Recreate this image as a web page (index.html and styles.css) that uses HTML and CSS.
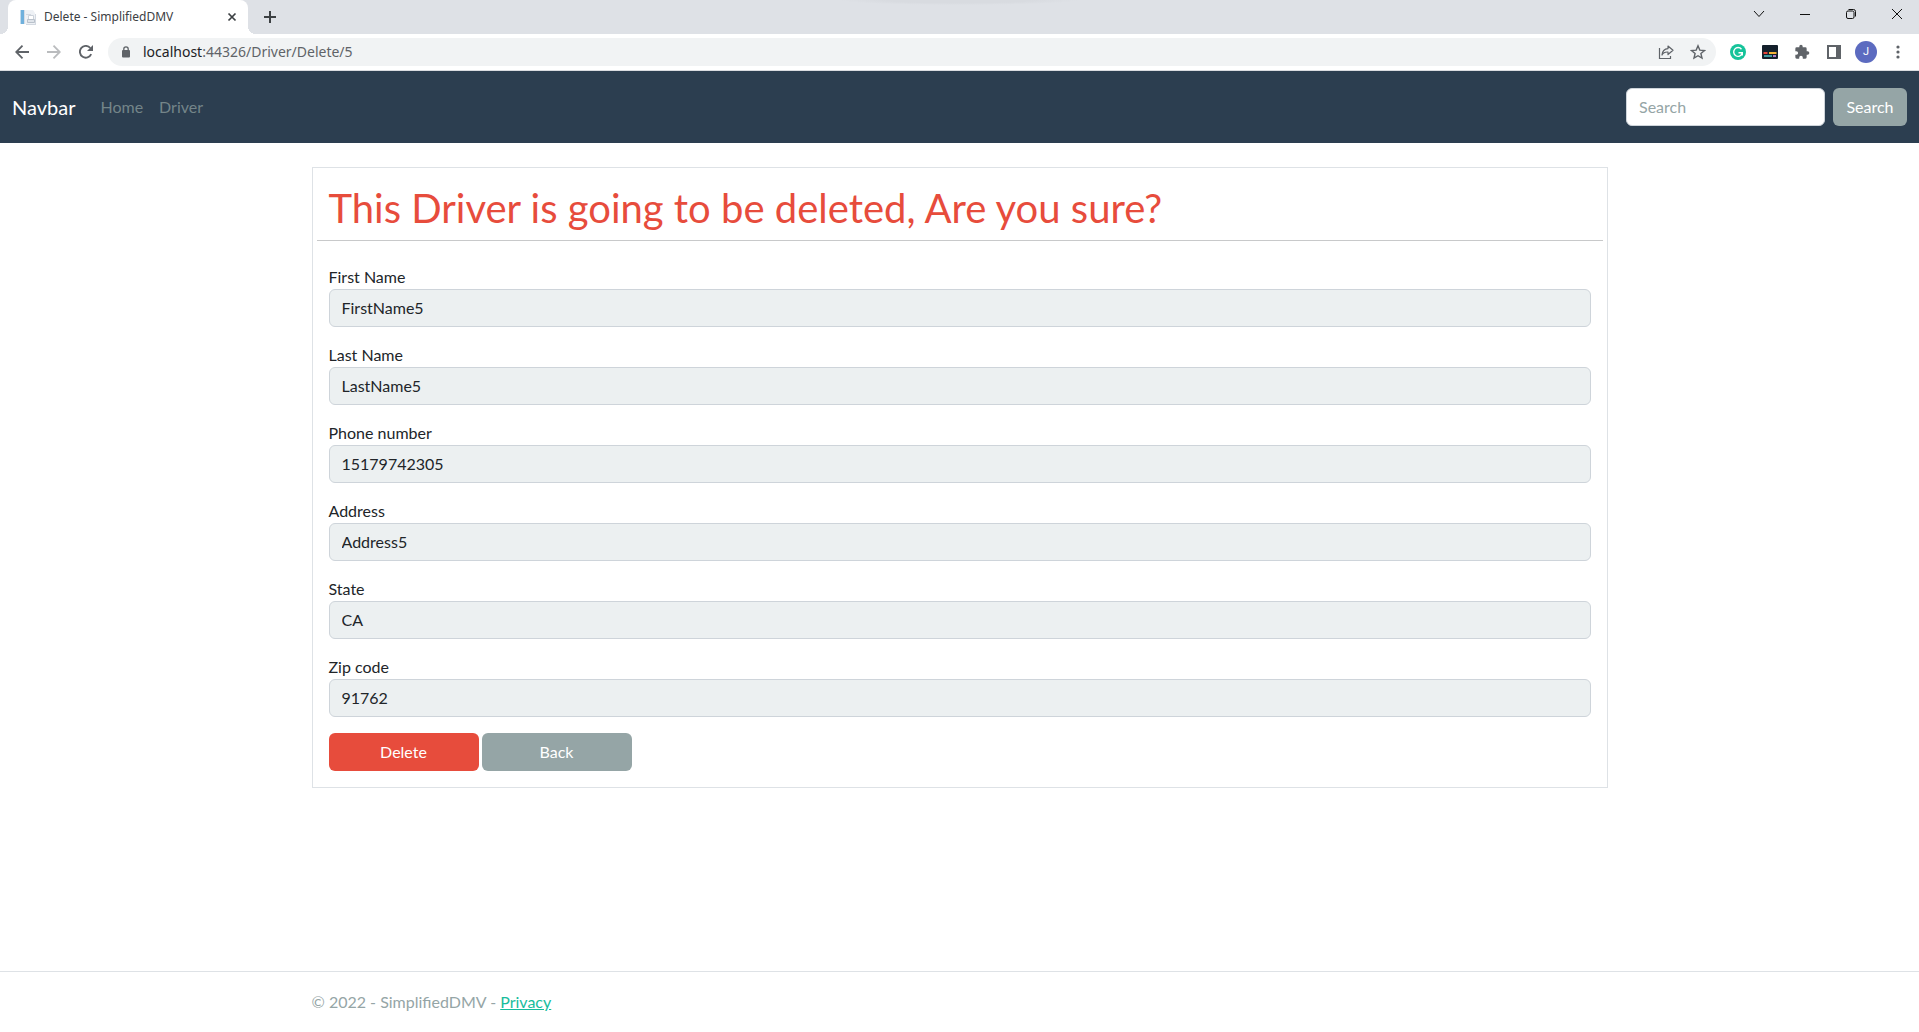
FILE: index.html
```html
<!DOCTYPE html>
<html lang="en">
<head>
<meta charset="utf-8">
<meta name="viewport" content="width=device-width, initial-scale=1">
<title>Delete - SimplifiedDMV</title>
<link rel="stylesheet" href="styles.css">
</head>
<body>
<header class="browser">
  <div class="tabstrip">
    <div class="tab">
      <svg class="favicon" width="16" height="16" viewBox="0 0 16 16"><path fill="#eef1f5" d="M5 1h8l2 3v11H5z"/><path fill="#6fb0dc" d="M1 1h3v14H1z"/><path fill="#c3dcee" d="M0 1h1v14H0z"/><path fill="#d7dde6" d="M4 1h1v14H4z"/><path stroke="#d3d9e1" d="M6 5.500h5M6 15.500h10M15.500 5v10"/><path fill="#fff" stroke="#ccd2da" d="M8.500 6.500h5v4h-5z"/><path fill="#dfe4ea" stroke="#b9c1cb" d="M7.500 10.500h7v3h-7z"/></svg>
      <span class="tab-title">Delete - SimplifiedDMV</span>
      <button class="icon-btn" type="button" aria-label="Close tab"><svg width="10" height="10" viewBox="0 0 10 10"><path d="M1.500 1.500l7 7M8.500 1.500l-7 7" stroke="#3c4043" stroke-width="1.700"/></svg></button>
    </div>
    <button class="icon-btn new-tab" type="button" aria-label="New tab"><svg width="12" height="12" viewBox="0 0 12 12"><path d="M6 0v12M0 6h12" stroke="#3c4043" stroke-width="2"/></svg></button>
    <div class="window-controls">
      <button class="icon-btn" type="button" aria-label="Search tabs"><svg width="12" height="12" viewBox="0 0 12 12"><path d="M1 3l5 5.500L11 3" fill="none" stroke="#111"/></svg></button>
      <button class="icon-btn" type="button" aria-label="Minimize"><svg width="10" height="12" viewBox="0 0 10 12"><path d="M0 6.500h10" stroke="#111"/></svg></button>
      <button class="icon-btn" type="button" aria-label="Restore"><svg width="10" height="10" viewBox="0 0 10 10"><rect x=".500" y="2" width="7.500" height="7.500" rx="1.500" fill="none" stroke="#111"/><path d="M2.500 .500H7.500a2 2 0 0 1 2 2V7.500" fill="none" stroke="#111"/></svg></button>
      <button class="icon-btn" type="button" aria-label="Close"><svg width="10" height="10" viewBox="0 0 10 10"><path d="M0 0l10 10M10 0L0 10" stroke="#111"/></svg></button>
    </div>
  </div>
  <div class="toolbar">
    <button class="icon-btn" type="button" aria-label="Back"><svg width="14" height="14" viewBox="0 0 14 14"><path d="M14 7H1.500M7.500 .700L1.200 7l6.300 6.300" fill="none" stroke="#5f6368" stroke-width="1.800"/></svg></button>
    <button class="icon-btn" type="button" aria-label="Forward"><svg width="14" height="14" viewBox="0 0 14 14"><path d="M0 7h12.500M6.500 .700L12.800 7l-6.300 6.300" fill="none" stroke="#babcbe" stroke-width="1.800"/></svg></button>
    <button class="icon-btn" type="button" aria-label="Reload"><svg width="14" height="14" viewBox="0 0 14 14"><path d="M12.200 9.200A5.900 5.900 0 1 1 11.300 3" fill="none" stroke="#5f6368" stroke-width="1.900"/><path d="M14 0v6H8z" fill="#5f6368"/></svg></button>
    <div class="omnibox">
      <svg width="10" height="12" viewBox="0 0 10 12"><rect x="1" y="4" width="8" height="7.500" rx="1" fill="#5f6368"/><path d="M2.800 4.500V3a2.200 2.200 0 0 1 4.400 0v1.500" fill="none" stroke="#5f6368" stroke-width="1.300"/></svg>
      <span class="url"><span class="host">localhost</span>:44326/Driver/Delete/5</span>
      <button class="icon-btn" type="button" aria-label="Share"><svg width="16" height="16" viewBox="0 0 16 16"><path d="M1.500 4v10.500h11V12" fill="none" stroke="#5f6368" stroke-width="1.200"/><path d="M10 2l5 4.300-5 4.200V8C7 7.800 5 9 4 11 4.300 7.300 6.300 4.900 10 4.600z" fill="none" stroke="#5f6368" stroke-width="1.200" stroke-linejoin="round"/></svg></button>
      <button class="icon-btn" type="button" aria-label="Bookmark"><svg width="16" height="16" viewBox="0 0 16 16"><path d="M8 1.800l1.800 4.300 4.700.400-3.600 3 1.100 4.600L8 11.700l-4 2.400 1.100-4.600-3.600-3 4.700-.400z" fill="none" stroke="#5f6368" stroke-width="1.400"/></svg></button>
    </div>
    <button class="icon-btn" type="button" aria-label="Grammarly"><svg width="16" height="16" viewBox="0 0 16 16"><circle cx="8" cy="8" r="8" fill="#15c39a"/><path d="M11.500 5.200A4.400 4.400 0 1 0 12.200 9.500M8.500 8.700H12.300V11.500" fill="none" stroke="#fff" stroke-width="1.400"/></svg></button>
    <button class="icon-btn" type="button" aria-label="Captions"><svg width="16" height="16" viewBox="0 0 16 16"><rect y="1" width="16" height="14" rx="1" fill="#14202b"/><path d="M1.500 9h4" stroke="#e8453c" stroke-width="2"/><path d="M7 9h7.500" stroke="#f5b335" stroke-width="2"/><path d="M2 12h8" stroke="#3f9aa0" stroke-width="2"/><path d="M11 12h3" stroke="#b07cc6" stroke-width="2"/></svg></button>
    <button class="icon-btn" type="button" aria-label="Extensions"><svg width="16" height="16" viewBox="0 0 24 24"><path fill="#5f6368" d="M20.500 11H19V7a2 2 0 0 0-2-2h-4V3.500a2.500 2.500 0 0 0-5 0V5H4a2 2 0 0 0-2 2v3.800h1.500a2.700 2.700 0 0 1 0 5.400H2V20a2 2 0 0 0 2 2h3.800v-1.500a2.700 2.700 0 0 1 5.400 0V22H17a2 2 0 0 0 2-2v-4h1.500a2.500 2.500 0 0 0 0-5z"/></svg></button>
    <button class="icon-btn" type="button" aria-label="Side panel"><svg width="16" height="16" viewBox="0 0 16 16"><path fill="#5f6368" fill-rule="evenodd" d="M1 1h14v14H1zM3 3v10h7V3z"/></svg></button>
    <button class="icon-btn avatar" type="button">J</button>
    <button class="icon-btn" type="button" aria-label="Menu"><svg width="16" height="16" viewBox="0 0 16 16"><g fill="#5f6368"><circle cx="8" cy="3" r="1.600"/><circle cx="8" cy="8" r="1.600"/><circle cx="8" cy="13" r="1.600"/></g></svg></button>
  </div>
</header>

<nav class="navbar">
  <a class="brand" href="#">Navbar</a>
  <a class="nav-link" href="#">Home</a>
  <a class="nav-link" href="#">Driver</a>
  <form class="search">
    <input class="form-control search-input" type="search" placeholder="Search" aria-label="Search">
    <button class="btn btn-secondary" type="button">Search</button>
  </form>
</nav>

<main class="container">
  <form class="card">
    <h1 class="title">This Driver is going to be deleted, Are you sure?</h1>
    <hr class="rule">
    <div class="field"><label for="first">First Name</label><input class="form-control" id="first" value="FirstName5" disabled></div>
    <div class="field"><label for="last">Last Name</label><input class="form-control" id="last" value="LastName5" disabled></div>
    <div class="field"><label for="phone">Phone number</label><input class="form-control" id="phone" value="15179742305" disabled></div>
    <div class="field"><label for="address">Address</label><input class="form-control" id="address" value="Address5" disabled></div>
    <div class="field"><label for="state">State</label><input class="form-control" id="state" value="CA" disabled></div>
    <div class="field"><label for="zip">Zip code</label><input class="form-control" id="zip" value="91762" disabled></div>
    <div class="actions">
      <button class="btn btn-danger" type="button">Delete</button>
      <a class="btn btn-secondary" href="#">Back</a>
    </div>
  </form>
</main>

<footer class="footer">
  <div class="container">© 2022 - SimplifiedDMV - <a href="#">Privacy</a></div>
</footer>
</body>
</html>
```
FILE: styles.css
```css
*, *::before, *::after { box-sizing: border-box; }

body {
  margin: 0;
  min-height: 100vh;
  display: flex;
  flex-direction: column;
  background: #fff;
  color: #212529;
  font: 16px/24px Lato, sans-serif;
}

svg { display: block; }

.icon-btn {
  display: flex;
  flex: none;
  align-items: center;
  justify-content: center;
  padding: 0;
  border: 0;
  background: none;
}

/* Browser frame */
.browser {
  font-family: "Noto Sans", sans-serif;
  border-bottom: 1px solid #dadce0;
}

.tabstrip {
  display: flex;
  align-items: center;
  height: 34px;
  padding-left: 8px;
  background: radial-gradient(ellipse 120px 5px at 50% 0, #d8dbe0 60%, transparent) #dee1e6;
}

.tab {
  position: relative;
  display: flex;
  align-items: center;
  gap: 8px;
  align-self: stretch;
  width: 240px;
  padding: 0 11px 0 12px;
  border-radius: 8px 8px 0 0;
  background: #fff;
}

.tab::before,
.tab::after {
  content: "";
  position: absolute;
  bottom: 0;
  width: 8px;
  height: 8px;
}

.tab::before {
  left: -8px;
  background: radial-gradient(circle at 0 0, transparent 8px, #fff 8px);
}

.tab::after {
  right: -8px;
  background: radial-gradient(circle at 100% 0, transparent 8px, #fff 8px);
}

.tab-title {
  flex: 1;
  color: #3c4043;
  font-size: 12px;
  white-space: nowrap;
}

.new-tab { margin-left: 16px; }

.window-controls {
  display: flex;
  margin-left: auto;
  margin-right: -1px;
  margin-bottom: 6px;
}

.window-controls .icon-btn { width: 46px; height: 28px; }

.browser { overflow: hidden; }

.toolbar {
  display: flex;
  align-items: center;
  gap: 16px;
  height: 36px;
  padding: 0 13px 0 15px;
}

.toolbar > .icon-btn:nth-child(-n+2) { margin-right: 2px; }

.omnibox {
  display: flex;
  flex: 1;
  align-items: center;
  gap: 16px;
  height: 28px;
  margin: 0 -2px 0 -1px;
  padding: 0 10px 0 13px;
  border-radius: 14px;
  background: #f1f3f4;
}

.url {
  flex: 1;
  margin-left: -4px;
  color: #5f6368;
  font-size: 14px;
}

.host { color: #202124; }

.avatar {
  width: 22px;
  height: 22px;
  margin: 0 -3px;
  border-radius: 50%;
  background: #5c6bc0;
  color: #fff;
  font: 11px/22px Roboto, sans-serif;
}

/* Site navigation */
.navbar {
  display: flex;
  align-items: center;
  padding: 16px 12px;
  background: #2c3e50;
}

.brand {
  margin-right: 17px;
  color: #fff;
  font-size: 20px;
  line-height: 30px;
  text-decoration: none;
}

.nav-link {
  padding: 8px;
  color: #748589;
  text-decoration: none;
}

.search {
  display: flex;
  gap: 8px;
  margin-left: auto;
}

.form-control {
  display: block;
  width: 100%;
  height: 38px;
  padding: 5px 12px 7px;
  border: 1px solid #ced4da;
  border-radius: 6px;
  background: #fff;
  color: #212529;
  font: inherit;
}

.form-control:disabled { background: #ecf0f1; }
.form-control::placeholder { color: #95a5a6; }
.search-input { width: 199px; }

.btn {
  min-width: 74px;
  padding: 6px 12px;
  border: 1px solid transparent;
  border-radius: 6px;
  color: #fff;
  font: inherit;
  text-align: center;
  text-decoration: none;
}

.btn-secondary { background: #95a5a6; }
.btn-danger { background: #e74c3c; }

/* Page content */
.container {
  width: 100%;
  max-width: 1320px;
  margin: 0 auto;
  padding: 0 12px;
}

main.container { padding-top: 24px; }

.card {
  padding: 16px;
  border: 1px solid #dee2e6;
}

.title {
  margin: 0;
  color: #e74c3c;
  font-size: 40px;
  font-weight: 400;
  line-height: 48px;
}

.rule {
  height: 1px;
  margin: 8px -12px 24px;
  border: 0;
  background: #c8c9ca;
}

.field { margin-bottom: 16px; }
.field label { display: block; }

.actions { display: flex; gap: 3px; }
.actions .btn { width: 150px; }

.footer {
  margin-top: auto;
  border-top: 1px solid #dee2e6;
  color: #95a5a6;
  line-height: 60px;
}

.footer a { color: #18bc9c; }
```
